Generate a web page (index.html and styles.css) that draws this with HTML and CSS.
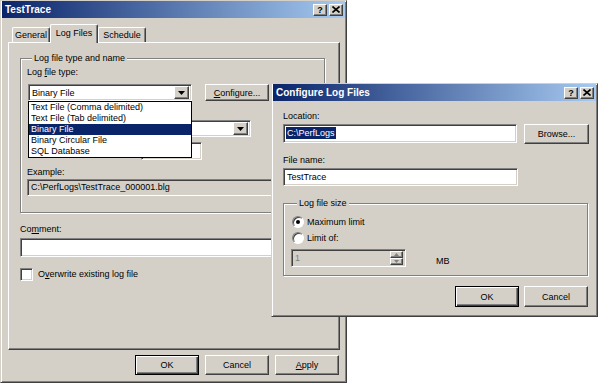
FILE: index.html
```html
<!DOCTYPE html>
<html lang="en">
<head>
    <meta charset="UTF-8">
    <meta name="viewport" content="width=device-width, initial-scale=1.0">
    <title>TestTrace</title>
    <link rel="stylesheet" href="styles.css">
</head>
<body>
<div class="desktop">

    <!-- Properties dialog -->
    <div class="window main-window">
        <div class="titlebar">
            <span>TestTrace</span>
            <div class="title-buttons">
                <span class="title-btn raised">?</span>
                <span class="title-btn raised">
                    <svg width="8" height="7" viewBox="0 0 8 7"><path d="M0.5 0.5L7.5 6.5M7.5 0.5L0.5 6.5" stroke="#000" stroke-width="1.6"/></svg>
                </span>
            </div>
        </div>

        <div class="tabs">
            <div class="tab tab-general">General</div>
            <div class="tab tab-active">Log Files</div>
            <div class="tab tab-schedule">Schedule</div>
        </div>

        <div class="tab-panel">
            <div class="group group-logtype">
                <div class="group-title">Log file type and name</div>
                <div class="label label-type">Log <u>f</u>ile type:</div>
                <div class="type-row">
                    <div class="combo combo-type sunken">
                        <span class="combo-text">Binary File</span>
                        <span class="combo-arrow raised">
                            <svg width="7" height="4" viewBox="0 0 7 4"><path d="M0 0H7L3.5 4Z" fill="#000"/></svg>
                        </span>
                        <ul class="dropdown-list">
                            <li>Text File (Comma delimited)</li>
                            <li>Text File (Tab delimited)</li>
                            <li class="selected">Binary File</li>
                            <li>Binary Circular File</li>
                            <li>SQL Database</li>
                        </ul>
                    </div>
                    <button class="btn btn-configure raised"><span><u>C</u>onfigure...</span></button>
                </div>
                <!-- these controls sit behind the open list -->
                <div class="combo combo-suffix sunken">
                    <span class="combo-text"></span>
                    <span class="combo-arrow raised">
                        <svg width="7" height="4" viewBox="0 0 7 4"><path d="M0 0H7L3.5 4Z" fill="#000"/></svg>
                    </span>
                </div>
                <div class="start-row">
                    <div class="field field-start sunken"></div>
                </div>
                <div class="label label-example">Example:</div>
                <div class="field field-example sunken">C:\PerfLogs\TestTrace_000001.blg</div>
            </div>

            <div class="label label-comment">Co<u>m</u>ment:</div>
            <div class="field field-comment sunken"></div>
            <div class="check-row">
                <span class="checkbox sunken"></span>
                <span>O<u>v</u>erwrite existing log file</span>
            </div>
        </div>

        <div class="button-row main-buttons">
            <button class="btn btn-default">OK</button>
            <button class="btn raised">Cancel</button>
            <button class="btn raised"><span><u>A</u>pply</span></button>
        </div>
    </div>

    <!-- Configure Log Files dialog -->
    <div class="window config-window">
        <div class="titlebar">
            <span>Configure Log Files</span>
            <div class="title-buttons">
                <span class="title-btn raised">?</span>
                <span class="title-btn raised">
                    <svg width="8" height="7" viewBox="0 0 8 7"><path d="M0.5 0.5L7.5 6.5M7.5 0.5L0.5 6.5" stroke="#000" stroke-width="1.6"/></svg>
                </span>
            </div>
        </div>

        <div class="config-body">
            <div class="label label-location">Location:</div>
            <div class="location-row">
                <div class="field field-location sunken"><span class="selected-text">C:\PerfLogs</span></div>
                <button class="btn btn-browse raised">Browse...</button>
            </div>
            <div class="label label-filename">File name:</div>
            <div class="field field-filename sunken">TestTrace</div>

            <div class="group group-size">
                <div class="group-title">Log file size</div>
                <div class="radio-row radio-first"><span class="radio checked"></span>Maximum limit</div>
                <div class="radio-row"><span class="radio"></span>Limit of:</div>
                <div class="limit-row">
                    <div class="spinner sunken">
                        <span class="spinner-text">1</span>
                        <span class="spin-buttons">
                            <span class="spin-btn raised"><svg width="5" height="3" viewBox="0 0 5 3"><path d="M0 3H5L2.5 0Z" fill="#808080"/></svg></span>
                            <span class="spin-btn raised"><svg width="5" height="3" viewBox="0 0 5 3"><path d="M0 0H5L2.5 3Z" fill="#808080"/></svg></span>
                        </span>
                    </div>
                    <span class="unit">MB</span>
                </div>
            </div>

            <div class="button-row config-buttons">
                <button class="btn btn-default">OK</button>
                <button class="btn raised">Cancel</button>
            </div>
        </div>
    </div>

</div>
</body>
</html>
```

FILE: styles.css
```css
* {
    box-sizing: border-box;
}
body {
    margin: 0;
    background: #fff;
    font-family: "Liberation Sans", Arial, sans-serif;
    font-size: 9px;
    color: #000;
}
.desktop {
    position: relative;
    width: 605px;
    height: 384px;
    overflow: hidden;
}

/* 3d edges */
.raised {
    background: #d4d0c8;
    border: 1px solid;
    border-color: #fff #404040 #404040 #fff;
    box-shadow: inset -1px -1px #808080;
}
.sunken {
    border: 1px solid;
    border-color: #808080 #fff #fff #808080;
    box-shadow: inset 1px 1px #404040, inset -1px -1px #d4d0c8;
}

/* windows */
.window {
    position: absolute;
    display: flex;
    flex-direction: column;
    background: #d4d0c8;
    border: 1px solid;
    border-color: #d4d0c8 #404040 #404040 #d4d0c8;
    box-shadow: inset 1px 1px #fff, inset -1px -1px #808080;
}
.main-window {
    left: 0;
    top: 0;
    width: 347px;
    height: 383px;
}
.config-window {
    left: 271px;
    top: 83px;
    width: 327px;
    height: 234px;
}
.titlebar {
    display: flex;
    align-items: center;
    justify-content: space-between;
    height: 17px;
    margin: 0 1px;
    padding: 0 2px 0 3px;
    background: linear-gradient(90deg, #0a246a, #a6caf0);
    color: #fff;
    font-size: 10px;
    font-weight: bold;
}
.title-buttons {
    display: flex;
    gap: 2px;
}
.title-btn {
    display: flex;
    align-items: center;
    justify-content: center;
    width: 14px;
    height: 12px;
    color: #000;
    font-size: 9px;
    font-weight: bold;
}

/* tabs */
.tabs {
    display: flex;
    align-items: flex-end;
    height: 18px;
    margin: 6px 0 0 11px;
}
.tab {
    height: 15px;
    padding-top: 1px;
    line-height: 12px;
    text-align: center;
    border-top: 1px solid #fff;
    border-left: 1px solid #fff;
    border-right: 1px solid #404040;
    border-radius: 2px 2px 0 0;
    box-shadow: inset -1px 0 #808080;
    background: #d4d0c8;
}
.tab-general {
    width: 38px;
}
.tab-schedule {
    width: 48px;
}
.tab-active {
    width: 48px;
    height: 19px;
    margin-bottom: -1px;
    padding-top: 2px;
    z-index: 1;
}
.tab-panel {
    width: 332px;
    height: 308px;
    margin-left: 7px;
    border: 1px solid;
    border-color: #fff #404040 #404040 #fff;
    box-shadow: inset -1px -1px #808080;
}

/* group boxes */
.group {
    border: 1px solid #808080;
    box-shadow: inset 1px 1px #fff, 1px 1px #fff;
}
.group-title {
    width: fit-content;
    margin: -6px 0 0 5px;
    padding: 0 2px;
    line-height: 11px;
    background: #d4d0c8;
}
.label {
    line-height: 11px;
}
.group-logtype {
    width: 305px;
    margin: 15px 0 0 11px;
    padding: 0 0 16px 6px;
}
.label-type {
    margin-top: 3px;
}
.type-row {
    display: flex;
    margin-top: 6px;
}

/* combo boxes */
.combo {
    display: flex;
    align-items: center;
    justify-content: space-between;
    height: 17px;
    margin-left: 1px;
    padding: 0 2px 0 3px;
    background: #fff;
}
.combo-type {
    position: relative;
    width: 164px;
}
.combo-suffix {
    width: 223px;
    margin-top: 19px;
}
.combo-arrow {
    display: flex;
    align-items: center;
    justify-content: center;
    width: 15px;
    height: 13px;
}
.dropdown-list {
    position: absolute;
    left: -1px;
    top: 16px;
    z-index: 2;
    width: 164px;
    margin: 0;
    padding: 0;
    list-style: none;
    background: #fff;
    border: 1px solid #000;
}
.dropdown-list li {
    height: 11px;
    line-height: 11px;
    padding-left: 2px;
}
.dropdown-list .selected {
    background: #0a246a;
    color: #fff;
}
.start-row {
    display: flex;
    margin-top: 5px;
    padding-left: 114px;
}

/* text fields */
.field {
    height: 18px;
    padding: 0 3px;
    line-height: 16px;
    background: #fff;
    white-space: nowrap;
    overflow: hidden;
}
.field-start {
    width: 61px;
}
.label-example {
    margin-top: 7px;
}
.field-example {
    width: 290px;
    height: 17px;
    margin-top: 1px;
    line-height: 15px;
    background: #d4d0c8;
}
.label-comment {
    margin: 11px 0 0 11px;
}
.field-comment {
    width: 306px;
    height: 19px;
    margin: 3px 0 0 11px;
}
.check-row {
    display: flex;
    align-items: center;
    gap: 5px;
    margin: 11px 0 0 11px;
    line-height: 13px;
}
.checkbox {
    width: 13px;
    height: 13px;
    background: #fff;
}

/* buttons */
.btn {
    display: flex;
    align-items: center;
    justify-content: center;
    width: 64px;
    height: 20px;
    padding: 0;
    font: inherit;
    color: #000;
    cursor: default;
}
.btn-default {
    background: #d4d0c8;
    border: 1px solid #000;
    box-shadow: inset 1px 1px #fff, inset -1px -1px #404040, inset -2px -2px #808080;
}
.btn-configure {
    height: 17px;
    margin-left: 13px;
}
.button-row {
    display: flex;
    justify-content: flex-end;
    gap: 6px;
}
.main-buttons {
    margin: 5px 7px 0 0;
}

/* configure dialog */
.config-body {
    padding: 0 8px 0 11px;
}
.label-location {
    margin-top: 10px;
}
.location-row {
    display: flex;
    gap: 7px;
    margin-top: 2px;
}
.field-location {
    width: 235px;
    height: 19px;
    padding-left: 2px;
    line-height: 17px;
}
.selected-text {
    padding: 1px 1px;
    background: #0a246a;
    color: #fff;
}
.btn-browse {
    width: 65px;
}
.label-filename {
    margin-top: 11px;
}
.field-filename {
    width: 235px;
    margin-top: 2px;
}
.group-size {
    width: 305px;
    margin-top: 17px;
    padding: 0 0 8px 8px;
}
.radio-row {
    display: flex;
    align-items: center;
    height: 13px;
    margin-top: 3px;
}
.radio-first {
    margin-top: 6px;
}
.radio {
    display: flex;
    align-items: center;
    justify-content: center;
    width: 12px;
    height: 12px;
    margin-right: 3px;
    border-radius: 50%;
    background: #fff;
    border: 1px solid;
    border-color: #808080 #fff #fff #808080;
    box-shadow: inset 1px 1px #404040;
}
.radio.checked::after {
    content: "";
    width: 4px;
    height: 4px;
    border-radius: 50%;
    background: #000;
}
.limit-row {
    display: flex;
    align-items: center;
    margin-top: 5px;
}
.spinner {
    display: flex;
    align-items: center;
    justify-content: space-between;
    width: 115px;
    height: 18px;
    margin-left: -1px;
    padding: 2px 2px 2px 3px;
    background: #d4d0c8;
    color: #808080;
}
.spin-buttons {
    display: flex;
    flex-direction: column;
}
.spin-btn {
    display: flex;
    align-items: center;
    justify-content: center;
    width: 13px;
    height: 7px;
}
.unit {
    margin-left: 30px;
    margin-top: 6px;
}
.config-buttons {
    gap: 5px;
    width: 305px;
    margin-top: 10px;
}
.config-buttons .btn {
    height: 21px;
}
```
